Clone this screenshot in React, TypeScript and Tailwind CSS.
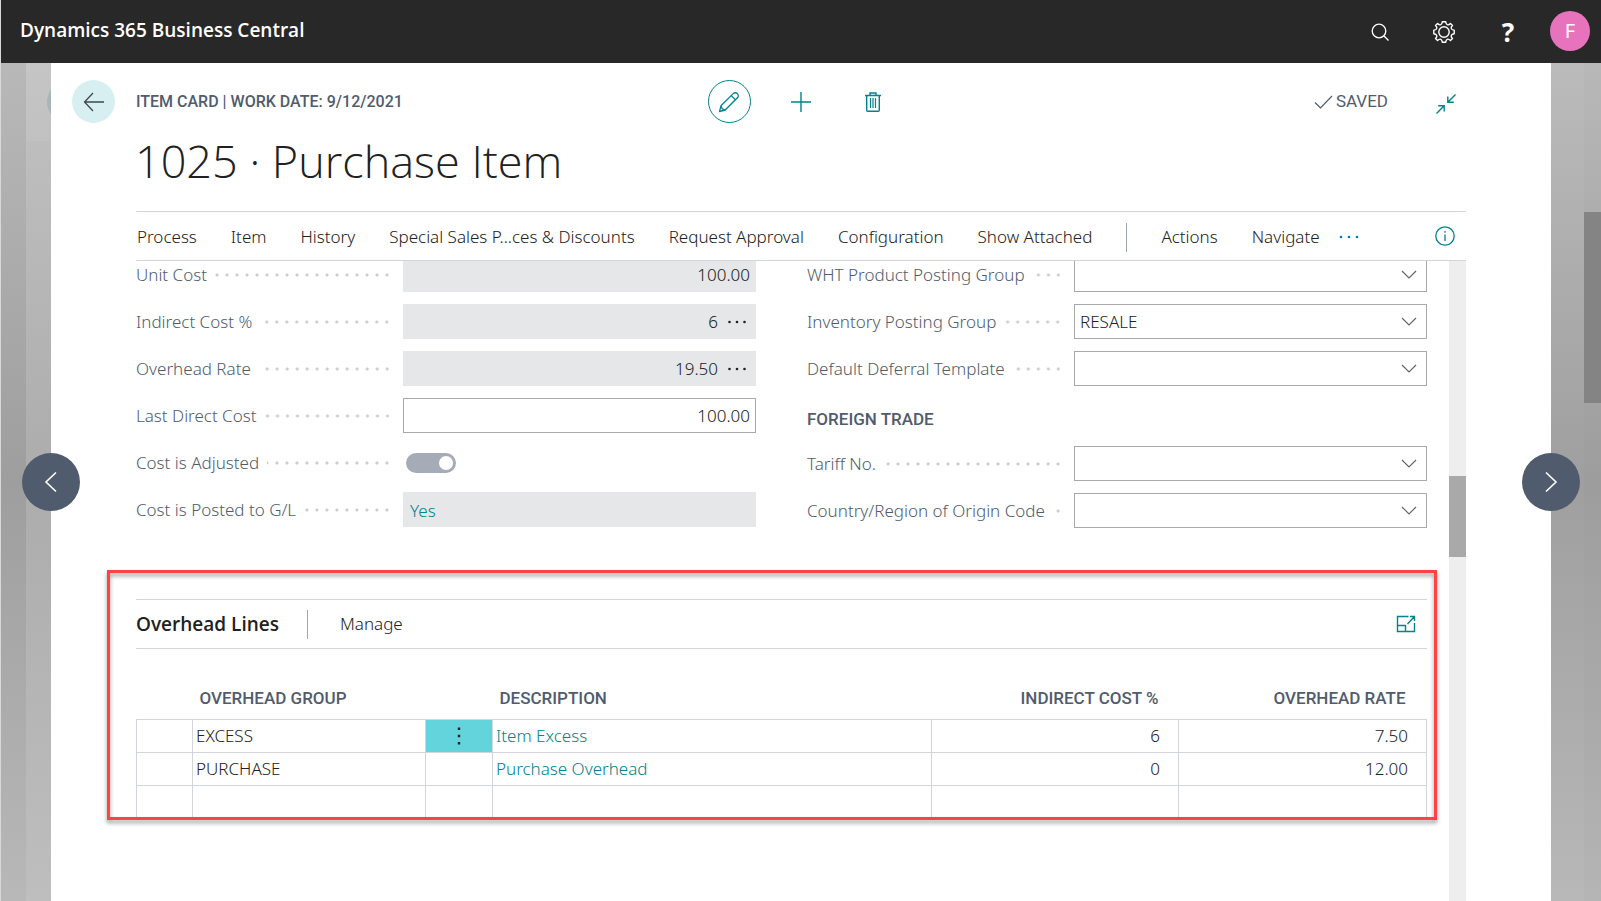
import type { ReactNode } from "react";

const menuItems = [
  "Process",
  "Item",
  "History",
  "Special Sales P...ces & Discounts",
  "Request Approval",
  "Configuration",
  "Show Attached",
];

const overheadLines = [
  { group: "EXCESS", description: "Item Excess", cost: "6", rate: "7.50", active: true },
  { group: "PURCHASE", description: "Purchase Overhead", cost: "0", rate: "12.00", active: false },
];

export default function App() {
  return (
    <div className="flex h-screen flex-col overflow-hidden border-l border-[#d8d8d8] bg-white font-['Noto_Sans',sans-serif] text-[17px] font-[350] text-[#212121]">
      <TopBar />
      <div className="relative flex min-h-0 flex-1">
        <LeftBackdrop />
        <main className="flex min-w-0 flex-1 flex-col">
          <CardHeader />
          <div className="flex min-h-0 flex-1 pr-[85px]">
            <div className="min-w-0 flex-1 overflow-hidden pr-[22px] pl-[85px]">
              <GeneralFields />
              <OverheadSection />
            </div>
            <div className="w-[17px] bg-[#eeeeee] pt-[215px]">
              <div className="h-[81px] bg-[#a9a9a9]" />
            </div>
          </div>
        </main>
        <RightBackdrop />
        <NavButton label="Previous record" side="left-[21px]">
          <path d="M24 9.500 14 19l10 9.500" />
        </NavButton>
        <NavButton label="Next record" side="right-[21px]">
          <path d="m14 9.500 10 9.500-10 9.500" />
        </NavButton>
      </div>
    </div>
  );
}

function TopBar() {
  return (
    <header className="flex h-[63px] shrink-0 items-center bg-[#282828] pr-[11px] pb-[2px] pl-[19px] text-white">
      <h1 className="flex-1 font-['Open_Sans',sans-serif] text-[19px] font-semibold">Dynamics 365 Business Central</h1>
      <div className="flex items-center">
        <button aria-label="Search" className="mt-[2px] mr-[42px]">
          <svg width="20" height="20" viewBox="0 0 20 20" fill="none" stroke="currentColor" strokeWidth="1.300">
            <circle cx="9" cy="9" r="6.800" />
            <path d="m13.800 13.800 4.700 4.700" />
          </svg>
        </button>
        <button aria-label="Settings" className="mt-[2px] mr-[42px]">
          <svg width="24" height="24" viewBox="0 0 24 24" fill="none" stroke="currentColor" strokeWidth="1.400" strokeLinejoin="round">
            <circle cx="12" cy="12" r="5.200" />
            <path d="M10.3 1.800h3.400q.3 2.500 1.900 3 1.200.4 2.800-1.300l2.100 2.100q-1.700 1.600-1.300 2.800.5 1.600 3 1.900v3.400q-2.500.3-3 1.900-.4 1.200 1.300 2.800l-2.100 2.100q-1.600-1.700-2.800-1.300-1.600.5-1.900 3h-3.400q-.3-2.500-1.900-3-1.200-.4-2.800 1.300l-2.100-2.100q1.700-1.600 1.300-2.800-.5-1.600-3-1.900v-3.400q2.500-.3 3-1.900.4-1.200-1.300-2.800l2.100-2.100q1.600 1.700 2.800 1.300 1.600-.5 1.900-3z" />
          </svg>
        </button>
        <button aria-label="Help" className="mt-[2px] mr-[32px] w-[20px] text-[26px] leading-[30px] font-bold">
          ?
        </button>
        <button aria-label="Account" className="size-[40px] rounded-full bg-[#e773bd] text-[20px] font-normal">
          F
        </button>
      </div>
    </header>
  );
}

function LeftBackdrop() {
  return (
    <div className="flex w-[50px] shrink-0">
      <div className="w-[25px] bg-linear-to-b from-[#b8b8b8] via-[#9e9e9e] to-[#b8b8b8]" />
      <div className="relative w-[25px] overflow-hidden bg-linear-to-b from-[#c2c2c2] via-[#acacac] to-[#bebebe]">
        <div className="h-[78px] bg-white/5" />
        <div className="absolute top-[18px] left-[21px] size-[42px] rounded-full bg-[#a7b5b7]" />
      </div>
    </div>
  );
}

function RightBackdrop() {
  return (
    <div className="flex w-[50px] shrink-0 justify-end bg-linear-to-b from-[#bbbbbb] via-[#9f9f9f] to-[#b8b8b8]">
      <div className="w-[17px] bg-black/1 pt-[149px]">
        <div className="h-[191px] bg-[#848484]" />
      </div>
    </div>
  );
}

function NavButton({ label, side, children }: { label: string; side: string; children: ReactNode }) {
  return (
    <button
      aria-label={label}
      className={`absolute top-1/2 flex size-[58px] -translate-y-1/2 items-center justify-center rounded-full bg-[#505c6d] text-white ${side}`}
    >
      <svg width="38" height="38" viewBox="0 0 38 38" fill="none" stroke="currentColor" strokeWidth="1.600">
        {children}
      </svg>
    </button>
  );
}

function CardHeader() {
  return (
    <div className="shrink-0 pt-[17px]">
      <div className="flex items-center pr-[85px] pl-[21px]">
        <button aria-label="Back" className="mr-[21px] flex size-[43px] items-center justify-center rounded-full bg-[#d8eff1]">
          <svg width="22" height="20" viewBox="0 0 22 20" fill="none" stroke="#3c4a50" strokeWidth="1.300">
            <path d="M21 10H1.500M10 1 1.500 10l8.500 9" />
          </svg>
        </button>
        <div className="grid flex-1 grid-cols-[1fr_auto_1fr] items-center font-['Roboto',sans-serif] text-[17px] text-[#505c6d]">
          <p className="text-[16px] font-medium">ITEM CARD | WORK DATE: 9/12/2021</p>
          <div className="flex gap-[29px] text-[#00838c]">
            <button aria-label="Edit" className="flex size-[43px] items-center justify-center rounded-full border border-current">
              <svg width="22" height="22" viewBox="0 0 22 22" fill="none" stroke="currentColor" strokeWidth="1.300" strokeLinejoin="round">
                <path d="M1.500 20.500 3 14.800 15.200 2.600a2.900 2.900 0 0 1 4.200 4.200L7.200 19z" />
                <path d="m3 14.800 1.200 3 3 1.200M13.200 4.600l4.200 4.200" />
              </svg>
            </button>
            <button aria-label="New" className="flex size-[43px] items-center justify-center">
              <svg width="20" height="20" viewBox="0 0 20 20" stroke="currentColor" strokeWidth="1.400">
                <path d="M10 0v20M0 10h20" />
              </svg>
            </button>
            <button aria-label="Delete" className="flex size-[43px] items-center justify-center">
              <svg width="18" height="20" viewBox="0 0 18 20" fill="none" stroke="currentColor" strokeWidth="1.400">
                <path d="M1 3.500h16M6 3.500V1h6v2.500M2.700 3.500v14.700q0 1 1 1h10.600q1 0 1-1V3.500" />
                <path d="M6.500 6v10M9 6v10M11.500 6v10" strokeWidth="1.200" />
              </svg>
            </button>
          </div>
          <div className="flex items-center justify-end pr-[10px]">
            <svg width="19" height="14" viewBox="0 0 19 14" fill="none" stroke="currentColor" strokeWidth="1.200">
              <path d="m1 7.500 5.500 5.500L18 1" />
            </svg>
            <span className="ml-[3px] font-normal">SAVED</span>
            <button aria-label="Collapse" className="mt-1 ml-12 text-[#00838c]">
              <svg width="20" height="20" viewBox="0 0 20 20" fill="none" stroke="currentColor" strokeWidth="1.400">
                <path d="M19.500.5 11.800 8.200M11.800 2.500v5.700h6M.5 19.500l7.700-7.700M8.200 17.500v-5.700h-6" />
              </svg>
            </button>
          </div>
        </div>
      </div>
      <h2 className="mt-[8px] px-[84px] font-['Open_Sans',sans-serif] text-[45px] leading-[60px] font-light">1025 · Purchase Item</h2>
      <nav className="mx-[85px] mt-[20px] flex h-[50px] items-center gap-[34px] border-y border-[#d2d5db] pt-[2px] pr-[11px] pl-px">
        {menuItems.map((item) => (
          <button key={item} className="whitespace-nowrap">
            {item}
          </button>
        ))}
        <div className="h-[29px] w-px bg-[#a0a6b1]" />
        <button>Actions</button>
        <button>Navigate</button>
        <button aria-label="More options" className="-ml-[15px] text-[#0078d4]">
          <svg width="20" height="4" viewBox="0 0 20 4" fill="currentColor">
            <circle cx="2" cy="2" r="1.300" />
            <circle cx="10" cy="2" r="1.300" />
            <circle cx="18" cy="2" r="1.300" />
          </svg>
        </button>
        <button aria-label="Details" className="ml-auto pb-[2px] text-[#00838c]">
          <svg width="20" height="20" viewBox="0 0 20 20" fill="none" stroke="currentColor" strokeWidth="1.300">
            <circle cx="10" cy="10" r="9.200" />
            <path d="M10 8.500V15M10 5v1.800" />
          </svg>
        </button>
      </nav>
    </div>
  );
}

function GeneralFields() {
  return (
    <div className="-mt-1 grid grid-cols-2 gap-x-[51px]">
      <div className="flex flex-col gap-3">
        <Field id="unit-cost" label="Unit Cost">
          <NumberBox id="unit-cost" value="100.00" readOnly />
        </Field>
        <Field id="indirect-cost" label="Indirect Cost %">
          <NumberBox id="indirect-cost" value="6" readOnly assist />
        </Field>
        <Field id="overhead-rate" label="Overhead Rate">
          <NumberBox id="overhead-rate" value="19.50" readOnly assist />
        </Field>
        <Field id="last-direct-cost" label="Last Direct Cost">
          <NumberBox id="last-direct-cost" value="100.00" />
        </Field>
        <Field id="cost-adjusted" label="Cost is Adjusted">
          <input
            id="cost-adjusted"
            type="checkbox"
            role="switch"
            defaultChecked
            className="ml-[3px] flex h-[20px] w-[50px] appearance-none items-center justify-end rounded-full bg-[#a6acb7] pr-[3px] before:size-[14px] before:rounded-full before:bg-white"
          />
        </Field>
        <Field id="cost-posted" label="Cost is Posted to G/L">
          <input
            id="cost-posted"
            readOnly
            defaultValue="Yes"
            className="h-[35px] w-full bg-[#e5e7e9] px-[7px] pt-[2px] text-[#00838c]"
          />
        </Field>
      </div>
      <div className="flex flex-col gap-3">
        <LookupField id="wht-group" label="WHT Product Posting Group" />
        <LookupField id="inventory-group" label="Inventory Posting Group" value="RESALE" />
        <LookupField id="deferral" label="Default Deferral Template" />
        <h3 className="h-[36px] pt-[8px] font-['Roboto',sans-serif] text-[17px] leading-[27px] font-medium text-[#505c6d]">
          FOREIGN TRADE
        </h3>
        <LookupField id="tariff" label="Tariff No." />
        <LookupField id="origin" label="Country/Region of Origin Code" />
      </div>
    </div>
  );
}

function Field({ id, label, children }: { id: string; label: string; children: ReactNode }) {
  return (
    <div className="flex h-[35px] items-center">
      <label htmlFor={id} className="flex w-[267px] shrink-0 items-center gap-2 pr-[14px] whitespace-nowrap text-[#505c6d]">
        {label}
        <span className="h-1 flex-1 bg-[radial-gradient(circle_at_8px_2px,#cccccc_1px,transparent_2px)] bg-[size:10px_4px] bg-right" />
      </label>
      <div className="flex min-w-0 flex-1">{children}</div>
    </div>
  );
}

type NumberBoxProps = { id: string; value: string; readOnly?: boolean; assist?: boolean };

function NumberBox({ id, value, readOnly, assist }: NumberBoxProps) {
  return (
    <div className={`flex h-[35px] w-full items-center ${readOnly ? "bg-[#e5e7e9]" : "border border-[#a9a9a9]"}`}>
      <input
        id={id}
        readOnly={readOnly}
        defaultValue={value}
        className={`min-w-0 flex-1 text-right ${assist ? "" : readOnly ? "pr-[6px]" : "pr-[5px]"}`}
      />
      {assist && (
        <button aria-label="Show details" className="flex w-[38px] justify-center">
          <svg width="18" height="4" viewBox="0 0 18 4" fill="currentColor">
            <circle cx="1.500" cy="2" r="1.300" />
            <circle cx="9" cy="2" r="1.300" />
            <circle cx="16.500" cy="2" r="1.300" />
          </svg>
        </button>
      )}
    </div>
  );
}

function LookupField({ id, label, value = "" }: { id: string; label: string; value?: string }) {
  return (
    <Field id={id} label={label}>
      <div className="relative flex-1">
        <select id={id} className="block h-[35px] w-full appearance-none border border-[#a9a9a9] bg-white px-[5px]">
          <option>{value}</option>
        </select>
        <svg
          className="pointer-events-none absolute top-[13px] right-[10px]"
          width="16"
          height="9"
          viewBox="0 0 16 9"
          fill="none"
          stroke="#666666"
          strokeWidth="1.200"
        >
          <path d="m1 1 7 7 7-7" />
        </svg>
      </div>
    </Field>
  );
}

function OverheadSection() {
  return (
    <section className="relative mt-[71px]">
      <div className="flex h-[50px] items-center border-y border-[#d2d5db] pr-[11px]">
        <h3 className="font-['Open_Sans',sans-serif] text-[19px] font-semibold">Overhead Lines</h3>
        <div className="ml-7 h-[29px] w-px bg-[#a0a6b1]" />
        <button className="ml-8">Manage</button>
        <button aria-label="Expand" className="ml-auto text-[#00838c]">
          <svg width="20" height="18" viewBox="0 0 20 18" fill="none" stroke="currentColor" strokeWidth="1.400">
            <path d="M12.500 1.500H1.500v15h17V8M1.500 10.500h8v6M11.500 9l6.500-7M14 1.500h4.500V6" />
          </svg>
        </button>
      </div>
      <table className="w-full table-fixed border-collapse">
        <colgroup>
          <col className="w-[56px]" />
          <col className="w-[233px]" />
          <col className="w-[67px]" />
          <col />
          <col className="w-[247px]" />
          <col className="w-[248px]" />
        </colgroup>
        <thead>
          <tr className="h-[70px] font-['Roboto',sans-serif] text-[17px] text-[#505c6d]">
            <th />
            <th className="pt-[30px] pl-[7px] text-left font-medium">OVERHEAD GROUP</th>
            <th />
            <th className="pt-[30px] pl-[7px] text-left font-medium">DESCRIPTION</th>
            <th className="pt-[30px] pr-[20px] text-right font-medium">INDIRECT COST %</th>
            <th className="pt-[30px] pr-[21px] text-right font-medium">OVERHEAD RATE</th>
          </tr>
        </thead>
        <tbody>
          {overheadLines.map((line) => (
            <tr key={line.group} className="h-[33px] *:border *:border-[#d2d5db] *:p-0">
              <td />
              <td>
                <span className="pl-[3px]">{line.group}</span>
              </td>
              <td className={line.active ? "bg-[#64d4dc]" : ""}>
                {line.active && (
                  <button aria-label="Row menu" className="mx-auto block">
                    <svg width="4" height="18" viewBox="0 0 4 18" fill="#212121">
                      <path d="M.8.500h2.400v2.400H.8zM.8 7.800h2.400v2.400H.8zM.8 15.100h2.400v2.400H.8z" />
                    </svg>
                  </button>
                )}
              </td>
              <td>
                <a href="#" className="pl-[3px] text-[#00838c]">
                  {line.description}
                </a>
              </td>
              <td className="text-right">
                <span className="pr-[18px]">{line.cost}</span>
              </td>
              <td className="text-right">
                <span className="pr-[18px]">{line.rate}</span>
              </td>
            </tr>
          ))}
          <tr className="h-[33px] *:border *:border-b-0 *:border-[#d2d5db]">
            <td />
            <td />
            <td />
            <td />
            <td />
            <td />
          </tr>
        </tbody>
      </table>
      {/* callout frame around the overhead lines */}
      <div className="pointer-events-none absolute -top-[29px] -right-[10px] -bottom-[2px] -left-[29px] border-3 border-[#ff4343] drop-shadow-[0_3px_2px_rgba(0,0,0,0.4)]" />
    </section>
  );
}
